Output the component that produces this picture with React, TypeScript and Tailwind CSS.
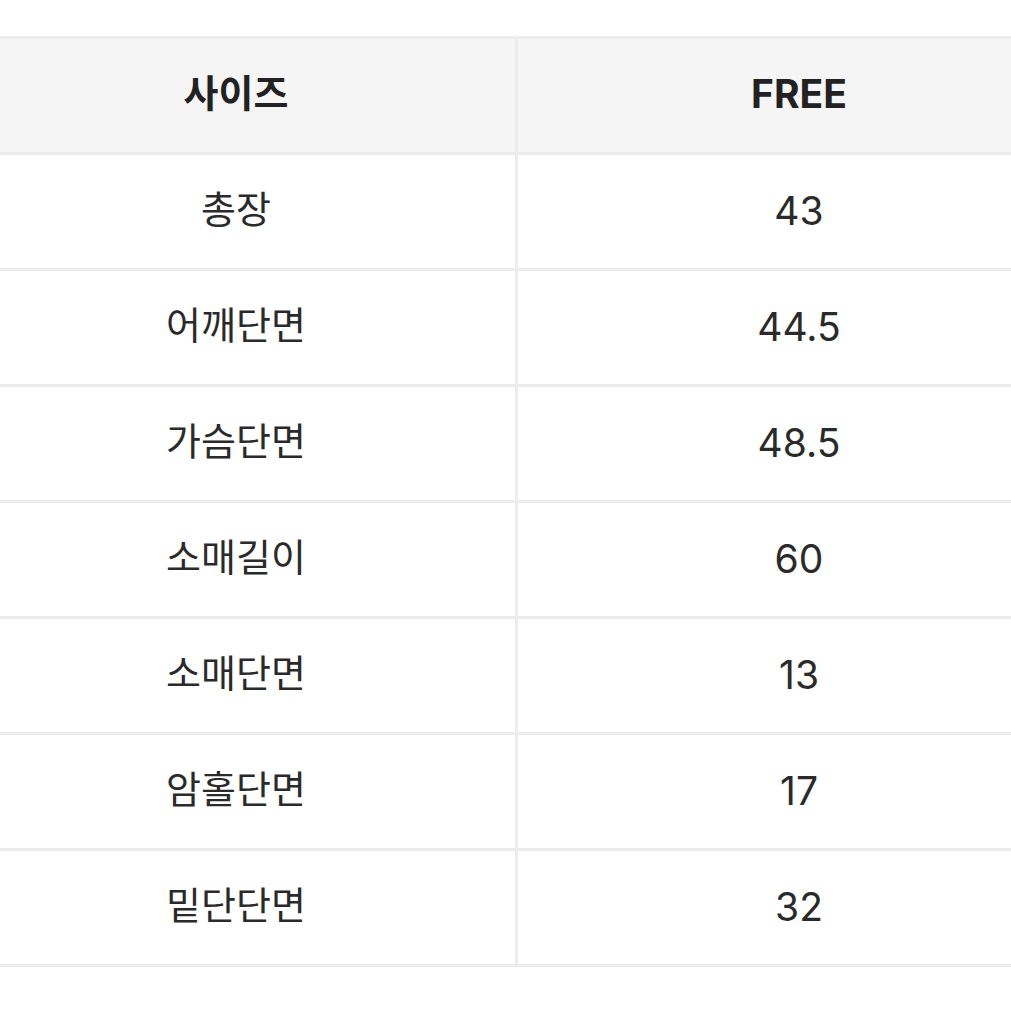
const rows: [string, string][] = [
  ["총장", "43"],
  ["어깨단면", "44.5"],
  ["가슴단면", "48.5"],
  ["소매길이", "60"],
  ["소매단면", "13"],
  ["암홀단면", "17"],
  ["밑단단면", "32"],
];

const font = { fontFamily: 'Inter, "Noto Sans CJK KR", "Noto Sans", sans-serif' };

const App = () => {
  return (
    <div className="h-[1011px] w-[1011px] overflow-hidden bg-white pt-[36px]" style={font}>
      <div className="ml-[-43px] w-[1123px] border-t-[3px] border-[#ececec]">
        <div className="grid grid-cols-[561px_562px] border-b-[3px] border-[#ececec] bg-[#f5f5f5]">
          <div className="flex h-[113px] items-center justify-center border-r-[3px] border-[#ececec] pb-[4px] text-[38px] font-bold text-[#222]">
            사이즈
          </div>
          <div className="flex h-[113px] items-center justify-center pb-[2px] text-[39px] font-bold text-[#222]">
            FREE
          </div>
        </div>
        {rows.map(([label, value]) => (
          <div key={label} className="grid grid-cols-[561px_562px] border-b-[3px] border-[#ececec]">
            <div className="flex h-[113px] items-center justify-center border-r-[3px] border-[#ececec] pb-[4px] text-[38px] text-[#2a2a2a]">
              {label}
            </div>
            <div className="flex h-[113px] items-center justify-center pb-[1px] text-[39px] text-[#2a2a2a]">
              {value}
            </div>
          </div>
        ))}
      </div>
    </div>
  );
};

export default App;
